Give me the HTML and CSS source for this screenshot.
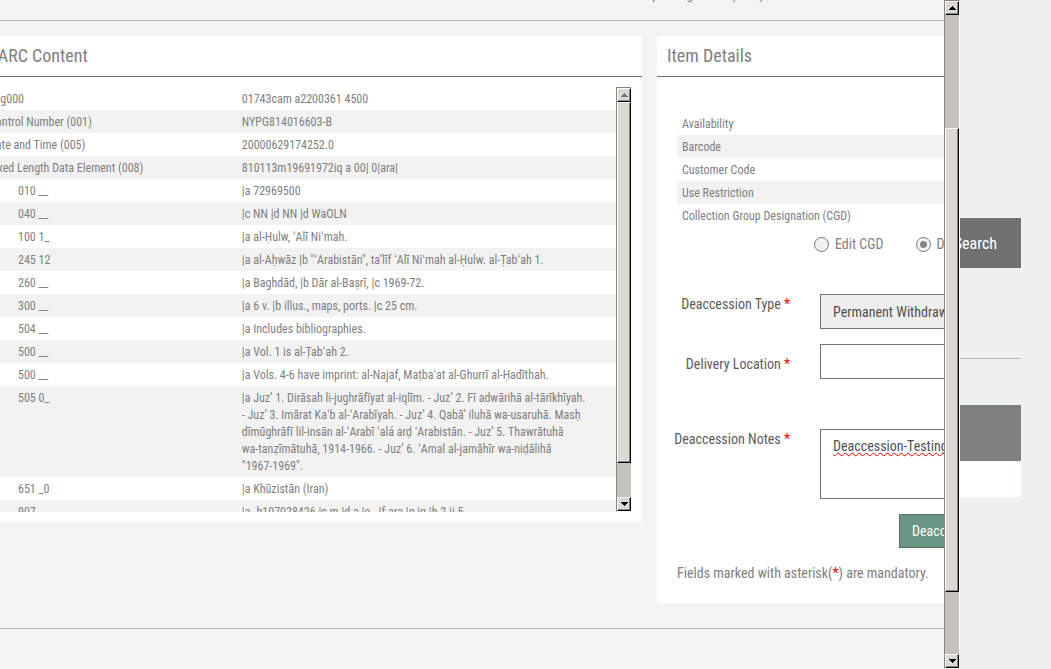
FILE: index.html
```html
<!DOCTYPE html>
<html lang="en">
<head>
<meta charset="utf-8">
<title>Item Details</title>
<link rel="stylesheet" href="styles.css">
</head>
<body>
<div class="screen">
  <main class="dialog">
    <div class="dialog-top"><span>Collection Group Designation (CGD)</span></div>
    <div class="panels">
      <section class="panel marc">
        <h2 class="panel-title">MARC Content</h2>
        <div class="marc-view">
          <div class="marc-scroll">
            <table class="rows">
              <tbody>
                <tr><th scope="row">Tag000</th><td>01743cam a2200361 4500</td></tr>
                <tr><th scope="row">Control Number (001)</th><td>NYPG814016603-B</td></tr>
                <tr><th scope="row">Date and Time (005)</th><td>20000629174252.0</td></tr>
                <tr><th scope="row">Fixed Length Data Element (008)</th><td>810113m19691972iq a 00| 0|ara|</td></tr>
                <tr class="sub"><th scope="row">010 __</th><td>|a 72969500</td></tr>
                <tr class="sub"><th scope="row">040 __</th><td>|c NN |d NN |d WaOLN</td></tr>
                <tr class="sub"><th scope="row">100 1_</th><td>|a al-Ḥulw, ʻAlī Niʻmah.</td></tr>
                <tr class="sub"><th scope="row">245 12</th><td>|a al-Aḥwāz |b "ʻArabistān", taʼlīf ʻAlī Niʻmah al-Ḥulw. al-Ṭabʻah 1.</td></tr>
                <tr class="sub"><th scope="row">260 __</th><td>|a Baghdād, |b Dār al-Baṣrī, |c 1969-72.</td></tr>
                <tr class="sub"><th scope="row">300 __</th><td>|a 6 v. |b illus., maps, ports. |c 25 cm.</td></tr>
                <tr class="sub"><th scope="row">504 __</th><td>|a Includes bibliographies.</td></tr>
                <tr class="sub"><th scope="row">500 __</th><td>|a Vol. 1 is al-Ṭabʻah 2.</td></tr>
                <tr class="sub"><th scope="row">500 __</th><td>|a Vols. 4-6 have imprint: al-Najaf, Maṭbaʻat al-Ghurrī al-Ḥadīthah.</td></tr>
                <tr class="sub"><th scope="row">505 0_</th><td>|a Juzʼ 1. Dirāsah li-jughrāfīyat al-iqlīm. - Juzʼ 2. Fī adwārihā al-tārīkhīyah.<br>- Juzʼ 3. Imārat Kaʻb al-ʻArabīyah. - Juzʼ 4. Qabāʼ iluhā wa-usaruhā. Masḥ<br>dīmūghrāfī lil-insān al-ʻArabī ʻalá arḍ ʻArabistān. - Juzʼ 5. Thawrātuhā<br>wa-tanẓīmātuhā, 1914-1966. - Juzʼ 6. ʻAmal al-jamāhīr wa-niḍālihā<br>"1967-1969".</td></tr>
                <tr class="sub"><th scope="row">651 _0</th><td>|a Khūzistān (Iran)</td></tr>
                <tr class="sub"><th scope="row">907 __</th><td>|a .b107028426 |c m |d a |e - |f ara |g iq |h 2 |i 5</td></tr>
              </tbody>
            </table>
          </div>
          <div class="scrollbar scrollbar-marc">
            <button class="arrow" type="button" aria-label="Scroll up" disabled><svg width="7" height="4" viewBox="0 0 7 4" shape-rendering="crispEdges"><path d="M3 0h1v1h1v1h1v1h1v1H0V3h1V2h1V1h1z"/></svg></button>
            <span class="thumb"></span>
            <span class="after"></span>
            <button class="arrow" type="button" aria-label="Scroll down"><svg width="7" height="4" viewBox="0 0 7 4" shape-rendering="crispEdges"><path d="M0 0h7v1H6v1H5v1H4v1H3V3H2V2H1V1H0z"/></svg></button>
          </div>
        </div>
      </section>

      <section class="panel item">
        <h2 class="panel-title">Item Details</h2>
        <div class="item-body">
          <table class="rows">
            <tbody>
              <tr><th scope="row">Availability</th></tr>
              <tr><th scope="row">Barcode</th></tr>
              <tr><th scope="row">Customer Code</th></tr>
              <tr><th scope="row">Use Restriction</th></tr>
              <tr><th scope="row">Collection Group Designation (CGD)</th></tr>
            </tbody>
          </table>
          <div class="choices">
            <label class="choice"><input type="radio" name="action">Edit CGD</label>
            <label class="choice"><input type="radio" name="action" checked>Deaccession</label>
          </div>
          <form class="form">
            <label for="type">Deaccession Type <b>*</b></label>
            <select id="type" class="field filled"><option>Permanent Withdrawal</option></select>
            <label for="location" class="low">Delivery Location <b>*</b></label>
            <select id="location" class="field"><option></option></select>
            <label for="notes" class="notes-row">Deaccession Notes <b>*</b></label>
            <textarea id="notes" class="field notes notes-row" spellcheck="false">Deaccession-Testing</textarea>
            <button class="submit" type="button">Deaccession</button>
          </form>
          <p class="hint">Fields marked with asterisk(<b>*</b>) are mandatory.</p>
        </div>
      </section>
    </div>
    <hr class="dialog-end">
  </main>

  <div class="scrollbar scrollbar-main">
    <button class="arrow" type="button" aria-label="Scroll page up"><svg width="7" height="4" viewBox="0 0 7 4" shape-rendering="crispEdges"><path d="M3 0h1v1h1v1h1v1h1v1H0V3h1V2h1V1h1z"/></svg></button>
    <span class="before"></span>
    <span class="thumb"></span>
    <span class="after"></span>
    <button class="arrow" type="button" aria-label="Scroll page down"><svg width="7" height="4" viewBox="0 0 7 4" shape-rendering="crispEdges"><path d="M0 0h7v1H6v1H5v1H4v1H3V3H2V2H1V1H0z"/></svg></button>
  </div>

  <aside class="backdrop">
    <button class="search" type="button">Search</button>
    <hr>
    <div class="results-head"></div>
    <div class="results-row"></div>
  </aside>
</div>
</body>
</html>
```
FILE: styles.css
```css
* { box-sizing: border-box; }

body {
  margin: 0;
  background: #edf1f0;
  color: #808080;
  font: 14px/20px "Roboto Condensed", "Liberation Sans Narrow", Roboto, sans-serif;
}

button, select, textarea { font: inherit; }
b { color: #ff0000; font-weight: 400; }
hr { margin: 0; border: 0; border-top: 1px solid #b2b5b3; }

.screen { display: flex; height: 100vh; overflow: hidden; }

/* dialog */
.dialog { flex: 1; min-width: 0; overflow: hidden; background: #f3f3f3; }
.dialog-top {
  display: flex;
  align-items: flex-end;
  height: 21px;
  padding: 0 0 16px 567px;
  border-bottom: 1px solid #b2b5b3;
  white-space: nowrap;
}
.panels { display: flex; align-items: flex-start; gap: 15px; margin: 15px 0 25px -26px; }
.panel { background: #fff; }
.marc { flex: 668 1 0; min-width: 0; }
.item { flex: 287 1 0; min-width: 0; overflow: hidden; }
.panel-title {
  margin: 0;
  padding: 8px 10px;
  border-bottom: 1px solid #66706c;
  font-size: 18px;
  font-weight: 400;
  line-height: 24px;
}

.rows { width: 100%; border-collapse: collapse; font-size: 12px; line-height: 17px; }
.rows th, .rows td { padding: 4px 5px 2px; text-align: left; vertical-align: top; font-weight: 400; }
.rows tr:nth-child(even) { background: #f2f2f2; }

.marc-view { display: flex; height: 445px; padding: 10px 11px 10px 10px; }
.marc-scroll { flex: 1; min-width: 0; overflow: hidden; }
.marc-scroll th { width: 40%; white-space: nowrap; }
.marc-scroll .sub th { padding-left: 34px; }

.item-body { padding: 35px 0 20px 20px; }
.item-body .rows { white-space: nowrap; }
.choices { display: flex; gap: 32px; padding: 7px 0 0 137px; white-space: nowrap; }
.choice { display: flex; align-items: center; gap: 6px; }
.choice input {
  appearance: none;
  flex: none;
  width: 15px;
  height: 15px;
  margin: 0;
  border: 1px solid #777;
  border-radius: 50%;
  background: #f2f2f2;
}
.choice input:checked { background: radial-gradient(circle, #858585 0 3px, #f2f2f2 4px); }

.form {
  display: grid;
  grid-template-columns: 113px 230px;
  column-gap: 30px;
  row-gap: 15px;
  margin-top: 40px;
  color: #5c5c5c;
}
.form label { justify-self: end; white-space: nowrap; }
.form .low { padding-top: 10px; }
.field {
  appearance: none;
  width: 100%;
  height: 35px;
  margin: 0;
  padding: 6px 12px;
  border: 1px solid #737373;
  border-radius: 0;
  background: #fff;
  color: #505050;
}
.filled { background: #eee; }
.form .notes-row { margin-top: 35px; }
.notes { height: 70px; resize: none; text-decoration: underline wavy #ff0000 1px; text-decoration-skip-ink: none; }
.submit {
  grid-column: 2;
  justify-self: start;
  height: 34px;
  margin-left: 79px;
  padding: 6px 12px;
  border: 1px solid #567467;
  background: #689682;
  color: #fff;
}
.hint { margin: 15px 0 0; white-space: nowrap; }
.dialog-end { border-color: #b2b2b2; }

/* classic scrollbars */
.scrollbar {
  display: flex;
  flex: none;
  flex-direction: column;
  width: 15px;
  border-left: 1px solid #8a8781;
  border-top: 1px solid #8a8781;
  border-bottom: 1px solid #fff;
  background: #c4c2bd;
}
.scrollbar-main { width: 16px; border-right: 1px solid #fff; }
.arrow, .thumb {
  border: 1px solid;
  border-color: #fff #000 #000 #fff;
  background: #dbd9d4;
  box-shadow: inset -1px -1px #8a8781;
}
.arrow { display: flex; flex: none; align-items: center; justify-content: center; height: 14px; padding: 0; }
.arrow svg { fill: #000; }
.arrow:disabled svg { fill: #77756f; }
.scrollbar-main .before { flex: 113; }
.scrollbar-main .thumb { flex: 464; }
.scrollbar-main .after { flex: 62; }
.scrollbar-marc .thumb { flex: 361; }
.scrollbar-marc .after { flex: 34; }

/* page behind the dialog */
.backdrop { flex: none; width: 91px; padding: 218px 30px 0 0; overflow: hidden; }
.search {
  display: flex;
  align-items: center;
  justify-content: flex-end;
  width: 100%;
  height: 50px;
  padding: 2px 24px 0 0;
  border: 0;
  overflow: hidden;
  background: #6f7270;
  color: #fff;
  font-size: 16px;
}
.backdrop hr { margin: 90px 0 46px; }
.results-head { height: 56px; background: #808080; }
.results-row { height: 36px; background: #fff; }
```
